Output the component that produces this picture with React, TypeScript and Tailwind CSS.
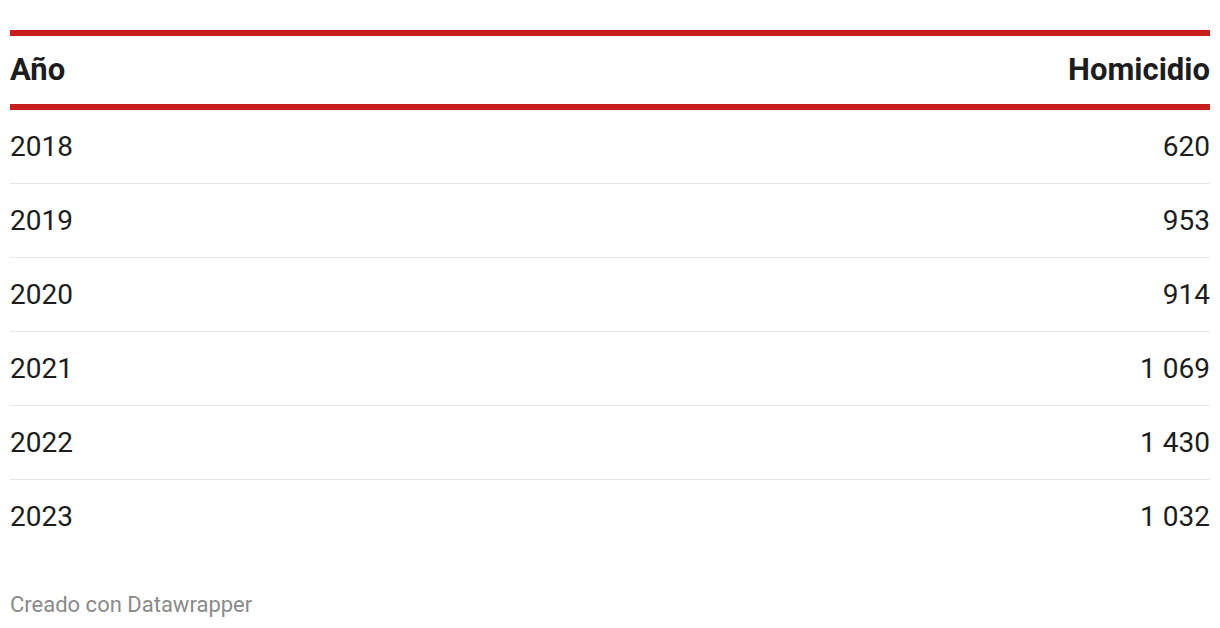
import React from "react";

const rows: [string, string][] = [
  ["2018", "620"],
  ["2019", "953"],
  ["2020", "914"],
  ["2021", "1 069"],
  ["2022", "1 430"],
  ["2023", "1 032"],
];

export default function App() {
  return (
    <div
      className="w-[1220px] h-[628px] bg-white px-[10px] pt-[30px] text-[#1d1d1d]"
      style={{ fontFamily: "Roboto, 'Liberation Sans', sans-serif" }}
    >
      <div className="border-t-[6px] border-[#c71e1d]">
        <div className="flex justify-between items-center h-[68px] border-b-[6px] border-[#c71e1d] box-content">
          <span className="text-[31px] font-bold">Año</span>
          <span className="text-[31px] font-bold">Homicidio</span>
        </div>
        {rows.map(([y, v], i) => (
          <div
            key={y}
            className={`flex justify-between items-center h-[74px] text-[28px] ${
              i < rows.length - 1 ? "border-b border-[#e6e6e6]" : ""
            }`}
          >
            <span>{y}</span>
            <span>{v}</span>
          </div>
        ))}
      </div>
      <div className="mt-[36px] text-[22px] leading-[30px] text-[#8a8a8a]">Creado con Datawrapper</div>
    </div>
  );
}
